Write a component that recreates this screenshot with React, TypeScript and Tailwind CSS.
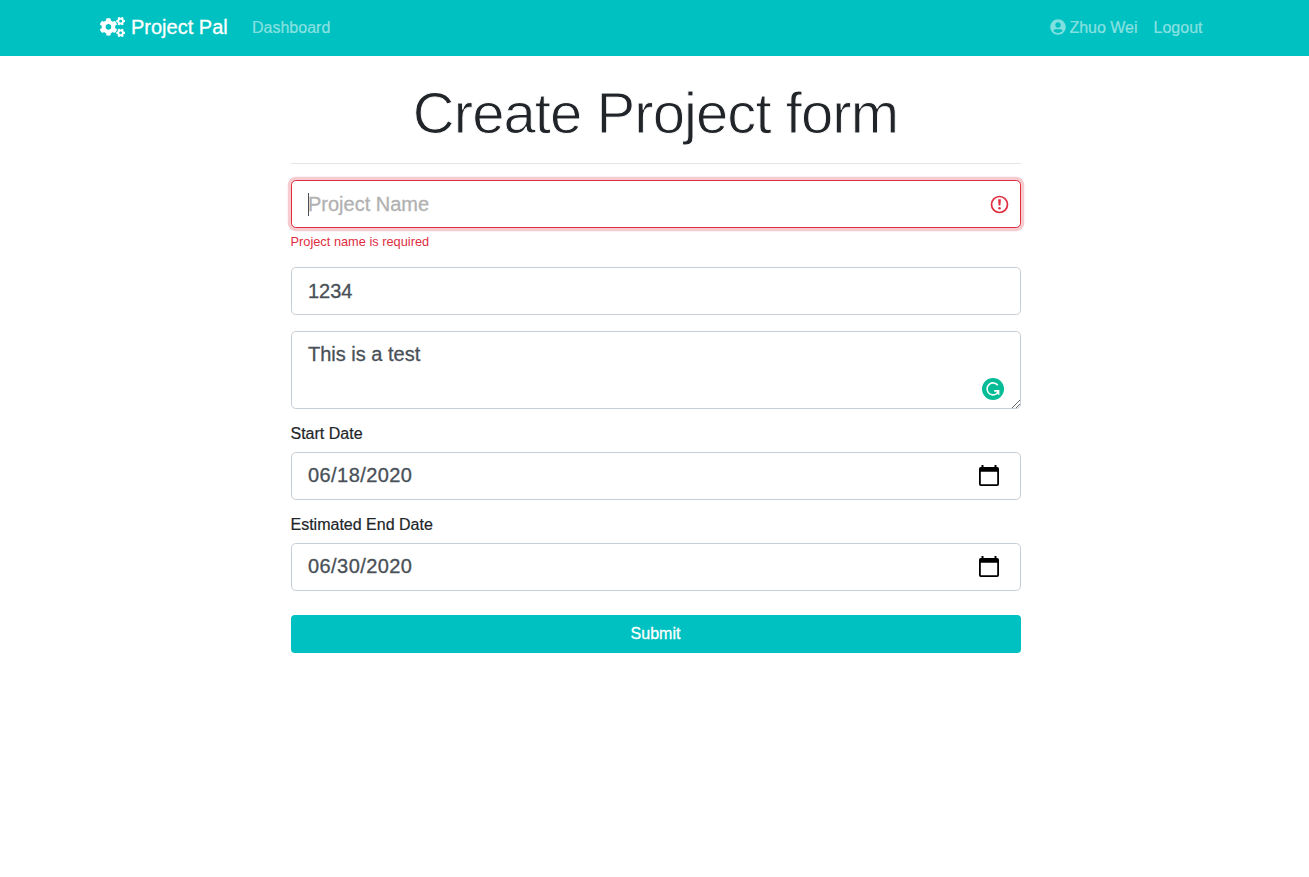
import React from "react";
import { FaCogs, FaUserCircle } from "react-icons/fa";

const field =
  "block w-full rounded-[4.8px] border border-[#c6cdd4] bg-white px-4 text-[20px] leading-[30px] text-[#495057] outline-none [-webkit-text-stroke:0.3px_#495057]";

function Calendar() {
  return (
    <svg className="absolute right-[21px] top-[12px] h-[23px] w-[22px]" viewBox="0 0 22 23" aria-hidden="true">
      <path
        fill="#000"
        fillRule="evenodd"
        d="M3.500 1h2v2h11V1h2v2h.7Q21 3 21 4.800V20.200Q21 22 19.200 22H2.800Q1 22 1 20.200V4.800Q1 3 2.800 3H3.500ZM2.800 7.800V20.200H19.200V7.800Z"
      />
    </svg>
  );
}

function DateField({ label, value }: { label: string; value: string }) {
  return (
    <div className="mt-[13px]">
      <label className="mb-[6px] block text-[16px] leading-6 text-[#212529] [-webkit-text-stroke:0.2px_#212529]">
        <span className="-ml-[0.5px]">{label}</span>
      </label>
      <div className="relative">
        <input className={`${field} h-12 pb-[9px] pt-[7px] tracking-[0.43px]`} defaultValue={value} />
        <Calendar />
      </div>
    </div>
  );
}

export default function App() {
  return (
    <div className="min-h-screen bg-white font-['Liberation_Sans',Arial,sans-serif] text-[#212529]">
      <nav className="flex h-14 items-center bg-[#00c1c1] pl-[100px] pr-[106.5px] text-[16px] leading-6">
        <a className="-mt-[2px] flex items-center text-[20px] leading-[30px] text-white [-webkit-text-stroke:0.3px_white]">
          <FaCogs className="mr-[6px] h-5 w-[25px]" strokeWidth={0} />
          <span className="w-[97px] whitespace-nowrap">Project Pal</span>
        </a>
        <a className="ml-6 text-white/50 [-webkit-text-stroke:0.2px_rgba(255,255,255,0.5)]">Dashboard</a>
        <a className="ml-auto flex items-center text-white/50 [-webkit-text-stroke:0.2px_rgba(255,255,255,0.5)]">
          <FaUserCircle className="-mt-[2px] mr-[3.5px] h-4 w-4" />
          Zhuo Wei
        </a>
        <a className="ml-4 text-white/50 [-webkit-text-stroke:0.2px_rgba(255,255,255,0.5)]">Logout</a>
      </nav>
      <main className="ml-[291px] w-[730px]">
        <h1 className="flex h-[107px] items-center justify-center whitespace-nowrap pr-[1px] pt-[5px] text-[58px] leading-[67px] tracking-[-0.92px] [-webkit-text-stroke:0.9px_white]">
          Create Project form
        </h1>
        <hr className="mb-4 border-t border-[#e5e5e5]" />
        <form>
          <div className="relative">
            <input
              placeholder="Project Name"
              className="block h-12 w-full rounded-[4.8px] border border-[#e02d3f] bg-white px-4 py-2 text-[20px] leading-[30px] shadow-[0_0_0_3.2px_rgba(220,53,69,0.25)] outline-none [-webkit-text-stroke:0.3px_#b1b1b1] placeholder:text-[#b1b1b1]"
            />
            <span className="absolute left-[17px] top-[13px] h-[23px] w-px bg-[#495057]" />
            <svg className="absolute right-[12px] top-[15px] h-[19px] w-[19px]" viewBox="0 0 19 19" aria-hidden="true">
              <circle cx="9.500" cy="9.500" r="8" fill="none" stroke="#e02d3f" strokeWidth="1.700" />
              <path d="M8.100 4.300h2.800l-.5 6.300H8.600Z" fill="#e02d3f" />
              <circle cx="9.500" cy="13.200" r="1.250" fill="#e02d3f" />
            </svg>
          </div>
          <div className="mt-1 h-[19px] text-[12.8px] leading-[19px] text-[#e02d3f]">
            <span className="-ml-[0.5px]">Project name is required</span>
          </div>
          <input className={`${field} mt-4 h-12 py-2`} defaultValue="1234" />
          <div className="relative mt-4">
            <textarea className={`${field} h-[78px] resize-none pb-2 pt-[7px]`} defaultValue="This is a test" />
            <svg className="absolute right-[17px] top-[47px] h-[22px] w-[22px]" viewBox="0 0 22 22" aria-hidden="true">
              <circle cx="11" cy="11" r="11" fill="#05bc96" />
              <path
                d="M15.800 7.200A6 6 0 1 0 14.400 15.900L16.300 13.400M12.200 12.900H16.600V16.800"
                fill="none"
                stroke="#fff"
                strokeWidth="1.600"
              />
            </svg>
            <svg className="absolute bottom-[1px] right-[1px] h-2 w-2" viewBox="0 0 8 8" aria-hidden="true">
              <path d="M0 8L8 0M4 8L8 4" fill="none" stroke="#666" strokeWidth="1" />
            </svg>
          </div>
          <DateField label="Start Date" value="06/18/2020" />
          <DateField label="Estimated End Date" value="06/30/2020" />
          <button
            type="button"
            className="mt-6 block h-[38px] w-full rounded-[4px] bg-[#00c1c1] pr-[1px] text-[16px] leading-6 text-white [-webkit-text-stroke:0.3px_white]"
          >
            Submit
          </button>
        </form>
      </main>
    </div>
  );
}
